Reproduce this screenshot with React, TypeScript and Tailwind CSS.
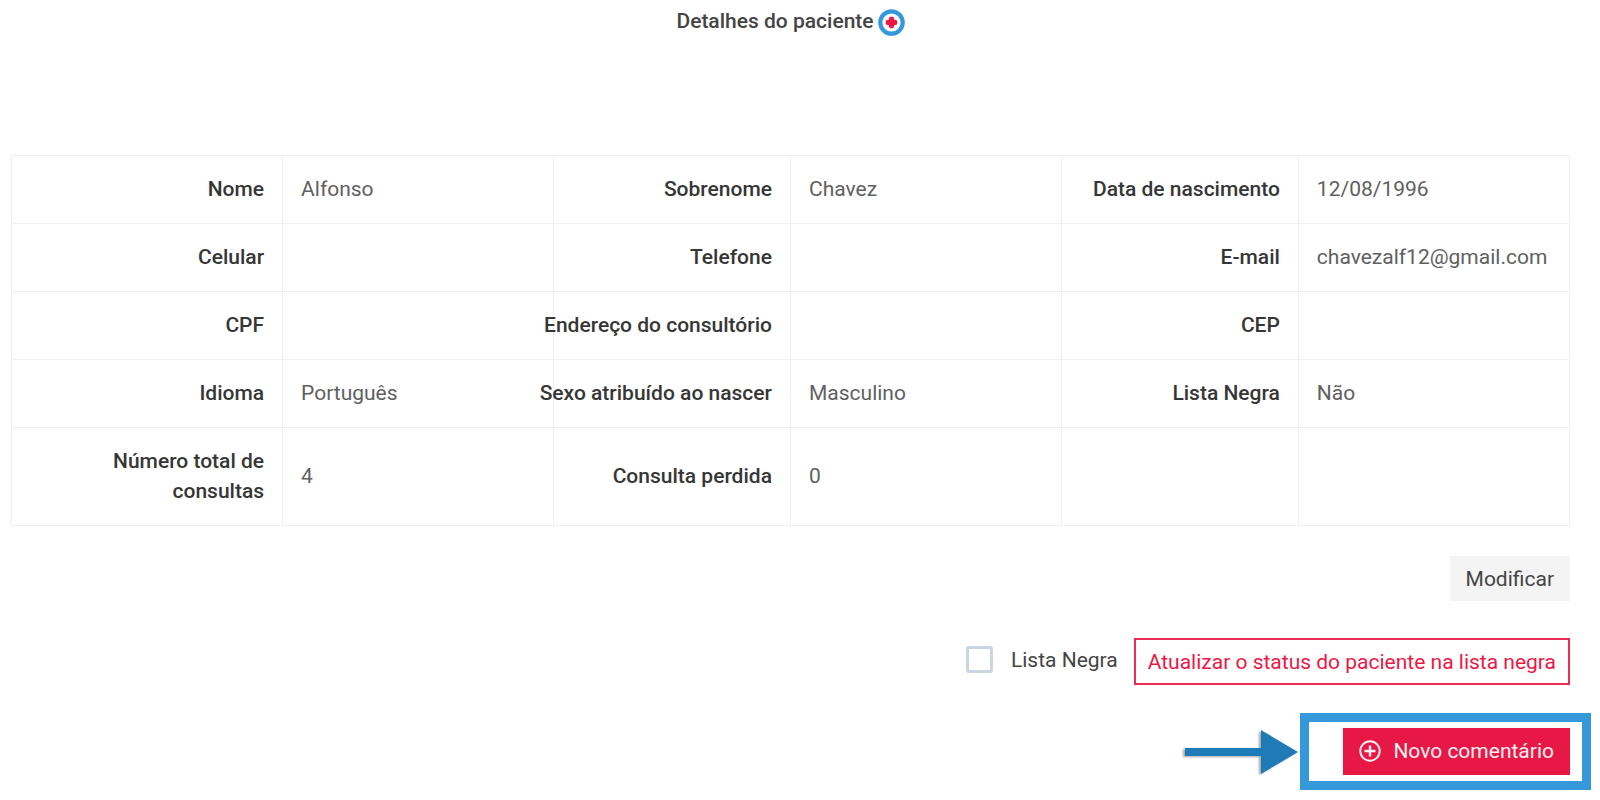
type Field = { label: string; value: string };

const rows: Field[][] = [
  [
    { label: "Nome", value: "Alfonso" },
    { label: "Sobrenome", value: "Chavez" },
    { label: "Data de nascimento", value: "12/08/1996" },
  ],
  [
    { label: "Celular", value: "" },
    { label: "Telefone", value: "" },
    { label: "E-mail", value: "chavezalf12@gmail.com" },
  ],
  [
    { label: "CPF", value: "" },
    { label: "Endereço do consultório", value: "" },
    { label: "CEP", value: "" },
  ],
  [
    { label: "Idioma", value: "Português" },
    { label: "Sexo atribuído ao nascer", value: "Masculino" },
    { label: "Lista Negra", value: "Não" },
  ],
  [
    { label: "Número total de consultas", value: "4" },
    { label: "Consulta perdida", value: "0" },
    { label: "", value: "" },
  ],
];

function AddBadge() {
  return (
    <svg viewBox="0 0 27 27" className="size-[27px]" aria-hidden="true">
      <circle cx="13.5" cy="13.5" r="11.2" fill="#fff" stroke="#3498db" strokeWidth="4.2" />
      <path
        d="M12.300 8.800h2.400l.8 2.700 2.700.8v2.400l-2.700.8-.8 2.700h-2.400l-.8-2.700-2.700-.8v-2.400l2.700-.8z"
        fill="#ec1846"
        stroke="#ec1846"
        strokeWidth="2"
        strokeLinejoin="round"
      />
    </svg>
  );
}

function PlusCircle() {
  return (
    <svg viewBox="0 0 22 22" className="size-[22px]" fill="none" stroke="currentColor" aria-hidden="true">
      <circle cx="11" cy="11" r="9.7" strokeWidth="2" />
      <path d="M11 5.5v11M5.5 11h11" strokeWidth="2.4" />
    </svg>
  );
}

function Arrow() {
  return (
    <svg viewBox="0 0 118 48" className="h-12 w-[118px] drop-shadow-[-2px_1px_1px_rgba(0,0,0,0.35)]" aria-hidden="true">
      <path d="M3 20h76V2l37 22-37 22V28H3z" fill="#1f7ab8" />
    </svg>
  );
}

function FieldCells({ label, value }: Field) {
  return (
    <>
      <th
        scope="row"
        className="border border-[#eef0f5] px-[18px] pt-[18px] pb-[19px] text-right align-middle font-medium text-[#363636]"
      >
        {label.startsWith("Número") ? (
          label
        ) : (
          <span className="flex justify-end whitespace-nowrap">{label}</span>
        )}
      </th>
      <td className="border border-[#eef0f5] px-[18px] pt-[18px] pb-[19px] align-middle whitespace-nowrap text-[#606060]">
        {value}
      </td>
    </>
  );
}

export default function App() {
  return (
    <main className="min-h-screen bg-white pr-[30px] pb-2 pl-[11px] font-['Roboto',sans-serif] text-[21px] leading-[30px] text-[#444]">
      <header className="flex items-center justify-center gap-1 pt-[6px]">
        <h1 className="font-medium">Detalhes do paciente</h1>
        <button type="button" aria-label="Adicionar" className="pt-[2px]">
          <AddBadge />
        </button>
      </header>

      <table className="mt-[119px] w-full table-fixed border-collapse">
        <colgroup>
          <col className="w-[17.4%]" />
          <col className="w-[17.4%]" />
          <col className="w-[15.2%]" />
          <col className="w-[17.4%]" />
          <col className="w-[15.2%]" />
          <col className="w-[17.4%]" />
        </colgroup>
        <tbody>
          {rows.map((row, i) => (
            <tr key={i} className="h-[68px]">
              {row.map((field, j) => (
                <FieldCells key={j} {...field} />
              ))}
            </tr>
          ))}
        </tbody>
      </table>

      <div className="mt-[30px] flex justify-end">
        <button type="button" className="h-[45px] bg-[#f4f4f4] px-4">
          Modificar
        </button>
      </div>

      <div className="mt-[37px] flex items-center justify-end gap-4">
        <label className="flex items-center gap-[18px] pb-1">
          <input type="checkbox" className="size-[27px] appearance-none rounded-[3px] border-3 border-[#cbd4e2] bg-white" />
          Lista Negra
        </label>
        <button type="button" className="h-[47px] border-2 border-[#ec2a54] px-3 text-[#ec1846]">
          Atualizar o status do paciente na lista negra
        </button>
      </div>

      <div className="mt-[43px] flex justify-end">
        <div className="relative">
          <button type="button" className="flex h-[47px] items-center gap-3 bg-[#e71845] px-4 pb-[2px] text-[#fff0f3]">
            <PlusCircle />
            Novo comentário
          </button>
          <div className="pointer-events-none absolute -top-[15px] -right-[21px] -bottom-[15px] -left-[43px] border-9 border-[#3498db]" />
          <div className="pointer-events-none absolute top-0 right-full mr-[43px]">
            <Arrow />
          </div>
        </div>
      </div>
    </main>
  );
}
